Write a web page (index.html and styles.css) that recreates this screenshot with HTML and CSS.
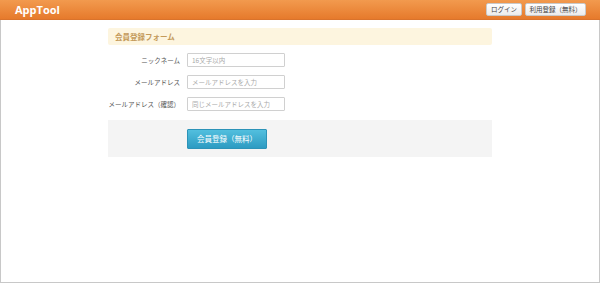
FILE: index.html
```html
<!DOCTYPE html>
<html lang="ja">
<head>
    <meta charset="UTF-8">
    <meta name="viewport" content="width=device-width, initial-scale=1.0">
    <title>AppTool</title>
    <link rel="stylesheet" href="styles.css">
</head>
<body>
<div class="frame">

    <!-- Header -->
    <div class="header">
        <div class="logo">AppTool</div>
        <div class="header-buttons">
            <a class="header-btn btn-login">ログイン</a>
            <a class="header-btn btn-signup">利用登録（無料）</a>
        </div>
    </div>

    <!-- Register form -->
    <div class="container">
        <div class="form-title">会員登録フォーム</div>

        <div class="form-rows">
            <div class="form-row">
                <label>ニックネーム</label>
                <input type="text" placeholder="16文字以内">
            </div>
            <div class="form-row">
                <label>メールアドレス</label>
                <input type="text" placeholder="メールアドレスを入力">
            </div>
            <div class="form-row">
                <label>メールアドレス（確認）</label>
                <input type="text" placeholder="同じメールアドレスを入力">
            </div>
        </div>

        <div class="form-footer">
            <button class="submit-btn">会員登録（無料）</button>
        </div>
    </div>

</div>
</body>
</html>
```

FILE: styles.css
```css
html, body {
    margin: 0;
    padding: 0;
    height: 100%;
}
body {
    font-family: "Noto Sans CJK JP", "Liberation Sans", sans-serif;
    background-color: #fff;
    color: #555;
}
.frame {
    box-sizing: border-box;
    height: 283px;
    border: 1px solid #c8c8c8;
    border-top: none;
}
.header {
    display: flex;
    align-items: center;
    justify-content: space-between;
    height: 19px;
    margin: 0 -1px;
    padding: 0 14px 0 15px;
    background: linear-gradient(to bottom, #f29a4e, #e67a2c);
    border-bottom: 1px solid #d9732c;
}
.logo {
    font-family: "Open Sans", "Liberation Sans", sans-serif;
    font-weight: bold;
    font-size: 11px;
    color: #fff;
}
.header-buttons {
    display: flex;
    gap: 3px;
}
.header-btn {
    display: block;
    box-sizing: border-box;
    height: 13px;
    line-height: 11px;
    text-align: center;
    font-size: 6.5px;
    color: #444;
    background: linear-gradient(to bottom, #ffffff, #ececec);
    border: 1px solid #c9c9c9;
    border-radius: 2px;
}
.btn-login {
    width: 36px;
}
.btn-signup {
    width: 61px;
}
.container {
    width: 384px;
    margin: 8px auto 0;
}
.form-title {
    height: 17px;
    line-height: 17px;
    padding-left: 7px;
    font-size: 7.5px;
    font-weight: bold;
    color: #c49a5a;
    background-color: #fdf5df;
    border-radius: 2px;
}
.form-rows {
    display: flex;
    flex-direction: column;
    gap: 8px;
    padding: 8px 0 8px;
}
.form-row {
    display: flex;
    align-items: center;
    gap: 7px;
}
.form-row label {
    width: 72px;
    text-align: right;
    white-space: nowrap;
    font-size: 6.5px;
    color: #555;
}
.form-row input {
    box-sizing: border-box;
    width: 98px;
    height: 14px;
    padding: 0 4px;
    font-family: inherit;
    font-size: 6.5px;
    border: 1px solid #d0d0d0;
    border-radius: 1px;
    outline: none;
}
.form-row input::placeholder {
    color: #aaa;
}
.form-footer {
    height: 37px;
    margin-top: 1px;
    display: flex;
    align-items: center;
    padding-left: 79px;
    background-color: #f4f4f4;
}
.submit-btn {
    width: 80px;
    height: 20px;
    font-family: inherit;
    font-size: 7.5px;
    color: #fff;
    background: linear-gradient(to bottom, #52bfde, #2d9bc2);
    border: 1px solid #2c93b8;
    border-radius: 1px;
    cursor: pointer;
}
```
